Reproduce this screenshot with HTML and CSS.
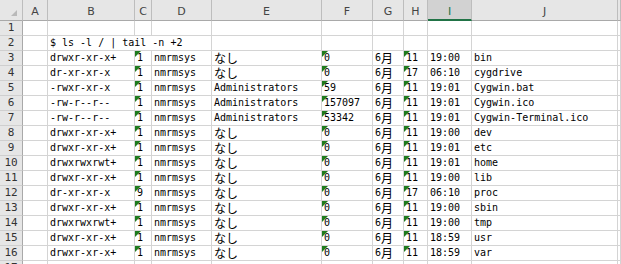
FILE: index.html
```html
<!DOCTYPE html>
<html lang="ja">
<head>
    <meta charset="UTF-8">
    <title>Sheet1</title>
    <link rel="stylesheet" href="styles.css">
</head>
<body>
    <div class="sheet">
        <!-- cabeçalho das colunas -->
        <div class="corner"></div>
        <div class="ch">A</div>
        <div class="ch">B</div>
        <div class="ch">C</div>
        <div class="ch">D</div>
        <div class="ch">E</div>
        <div class="ch">F</div>
        <div class="ch">G</div>
        <div class="ch">H</div>
        <div class="ch sel">I</div>
        <div class="ch">J</div>
        <div class="ch"></div>

        <div class="rh">1</div>
        <div class="c"></div><div class="c"></div><div class="c"></div><div class="c"></div><div class="c"></div><div class="c"></div><div class="c"></div><div class="c"></div><div class="c"></div><div class="c"></div><div class="c"></div>

        <div class="rh">2</div>
        <div class="c"></div><div class="c wide">$ ls -l / | tail -n +2</div><div class="c"></div><div class="c"></div><div class="c"></div><div class="c"></div><div class="c"></div><div class="c"></div><div class="c"></div>

        <div class="rh">3</div>
        <div class="c"></div><div class="c">drwxr-xr-x+</div><div class="c t">1</div><div class="c">nmrmsys</div><div class="c"><span class="jp">なし</span></div><div class="c t">0</div><div class="c">6<span class="jp">月</span></div><div class="c t">11</div><div class="c">19:00</div><div class="c">bin</div><div class="c"></div>

        <div class="rh">4</div>
        <div class="c"></div><div class="c">dr-xr-xr-x</div><div class="c t">1</div><div class="c">nmrmsys</div><div class="c"><span class="jp">なし</span></div><div class="c t">0</div><div class="c">6<span class="jp">月</span></div><div class="c t">17</div><div class="c">06:10</div><div class="c">cygdrive</div><div class="c"></div>

        <div class="rh">5</div>
        <div class="c"></div><div class="c">-rwxr-xr-x</div><div class="c t">1</div><div class="c">nmrmsys</div><div class="c">Administrators</div><div class="c t">59</div><div class="c">6<span class="jp">月</span></div><div class="c t">11</div><div class="c">19:01</div><div class="c">Cygwin.bat</div><div class="c"></div>

        <div class="rh">6</div>
        <div class="c"></div><div class="c">-rw-r--r--</div><div class="c t">1</div><div class="c">nmrmsys</div><div class="c">Administrators</div><div class="c t">157097</div><div class="c">6<span class="jp">月</span></div><div class="c t">11</div><div class="c">19:01</div><div class="c">Cygwin.ico</div><div class="c"></div>

        <div class="rh">7</div>
        <div class="c"></div><div class="c">-rw-r--r--</div><div class="c t">1</div><div class="c">nmrmsys</div><div class="c">Administrators</div><div class="c t">53342</div><div class="c">6<span class="jp">月</span></div><div class="c t">11</div><div class="c">19:01</div><div class="c">Cygwin-Terminal.ico</div><div class="c"></div>

        <div class="rh">8</div>
        <div class="c"></div><div class="c">drwxr-xr-x+</div><div class="c t">1</div><div class="c">nmrmsys</div><div class="c"><span class="jp">なし</span></div><div class="c t">0</div><div class="c">6<span class="jp">月</span></div><div class="c t">11</div><div class="c">19:00</div><div class="c">dev</div><div class="c"></div>

        <div class="rh">9</div>
        <div class="c"></div><div class="c">drwxr-xr-x+</div><div class="c t">1</div><div class="c">nmrmsys</div><div class="c"><span class="jp">なし</span></div><div class="c t">0</div><div class="c">6<span class="jp">月</span></div><div class="c t">11</div><div class="c">19:01</div><div class="c">etc</div><div class="c"></div>

        <div class="rh">10</div>
        <div class="c"></div><div class="c">drwxrwxrwt+</div><div class="c t">1</div><div class="c">nmrmsys</div><div class="c"><span class="jp">なし</span></div><div class="c t">0</div><div class="c">6<span class="jp">月</span></div><div class="c t">11</div><div class="c">19:01</div><div class="c">home</div><div class="c"></div>

        <div class="rh">11</div>
        <div class="c"></div><div class="c">drwxr-xr-x+</div><div class="c t">1</div><div class="c">nmrmsys</div><div class="c"><span class="jp">なし</span></div><div class="c t">0</div><div class="c">6<span class="jp">月</span></div><div class="c t">11</div><div class="c">19:00</div><div class="c">lib</div><div class="c"></div>

        <div class="rh">12</div>
        <div class="c"></div><div class="c">dr-xr-xr-x</div><div class="c t">9</div><div class="c">nmrmsys</div><div class="c"><span class="jp">なし</span></div><div class="c t">0</div><div class="c">6<span class="jp">月</span></div><div class="c t">17</div><div class="c">06:10</div><div class="c">proc</div><div class="c"></div>

        <div class="rh">13</div>
        <div class="c"></div><div class="c">drwxr-xr-x+</div><div class="c t">1</div><div class="c">nmrmsys</div><div class="c"><span class="jp">なし</span></div><div class="c t">0</div><div class="c">6<span class="jp">月</span></div><div class="c t">11</div><div class="c">19:00</div><div class="c">sbin</div><div class="c"></div>

        <div class="rh">14</div>
        <div class="c"></div><div class="c">drwxrwxrwt+</div><div class="c t">1</div><div class="c">nmrmsys</div><div class="c"><span class="jp">なし</span></div><div class="c t">0</div><div class="c">6<span class="jp">月</span></div><div class="c t">11</div><div class="c">19:00</div><div class="c">tmp</div><div class="c"></div>

        <div class="rh">15</div>
        <div class="c"></div><div class="c">drwxr-xr-x+</div><div class="c t">1</div><div class="c">nmrmsys</div><div class="c"><span class="jp">なし</span></div><div class="c t">0</div><div class="c">6<span class="jp">月</span></div><div class="c t">11</div><div class="c">18:59</div><div class="c">usr</div><div class="c"></div>

        <div class="rh">16</div>
        <div class="c"></div><div class="c">drwxr-xr-x+</div><div class="c t">1</div><div class="c">nmrmsys</div><div class="c"><span class="jp">なし</span></div><div class="c t">0</div><div class="c">6<span class="jp">月</span></div><div class="c t">11</div><div class="c">18:59</div><div class="c">var</div><div class="c"></div>

        <div class="rh">17</div>
        <div class="c"></div><div class="c"></div><div class="c"></div><div class="c"></div><div class="c"></div><div class="c"></div><div class="c"></div><div class="c"></div><div class="c"></div><div class="c"></div><div class="c"></div>
    </div>
</body>
</html>
```

FILE: styles.css
```css
body {
    margin: 0;
    background: #ffffff;
    font-family: 'DejaVu Sans Mono', 'Noto Sans CJK JP', monospace;
    font-size: 10px;
    color: #000000;
    overflow: hidden;
}

.sheet {
    display: grid;
    grid-template-columns: 23px 25px 87px 17px 60px 110px 51px 31px 24px 44px 146px 1fr;
    grid-template-rows: 21px;
    grid-auto-rows: 15px;
}

.sheet > div {
    box-sizing: border-box;
}

/* cabeçalhos */
.corner,
.ch {
    background: #e6e6e6;
    border-right: 1px solid #bdbdbd;
    border-bottom: 1px solid #a9a9a9;
}

.corner {
    position: relative;
}

.corner::after {
    content: "";
    position: absolute;
    right: 5px;
    bottom: 4px;
    border-left: 6px solid transparent;
    border-bottom: 6px solid #b9b9b9;
}

.ch {
    display: flex;
    justify-content: center;
    padding-top: 5px;
    line-height: 14px;
    font-family: 'DejaVu Sans', sans-serif;
    font-size: 11px;
    color: #444444;
}

.ch.sel {
    background: #d2d2d2;
    color: #217346;
    border-bottom: 2px solid #217346;
}

.rh {
    background: #e6e6e6;
    border-right: 1px solid #a9a9a9;
    border-bottom: 1px solid #cfcfcf;
    text-align: center;
    line-height: 14px;
    font-size: 11px;
    color: #333333;
}

/* células */
.c {
    display: flex;
    align-items: center;
    border-right: 1px solid #d4d4d4;
    border-bottom: 1px solid #d4d4d4;
    padding-left: 2px;
    line-height: 14px;
    white-space: nowrap;
    overflow: hidden;
}

.c.wide {
    grid-column: span 3;
}

.jp {
    font-family: 'Noto Sans CJK JP', sans-serif;
    font-size: 12px;
    line-height: 14px;
}

/* triângulo verde: número armazenado como texto */
.t {
    position: relative;
}

.t::before {
    content: "";
    position: absolute;
    left: 0;
    top: 0;
    border-top: 6px solid #1e7b1e;
    border-right: 6px solid transparent;
}
```
